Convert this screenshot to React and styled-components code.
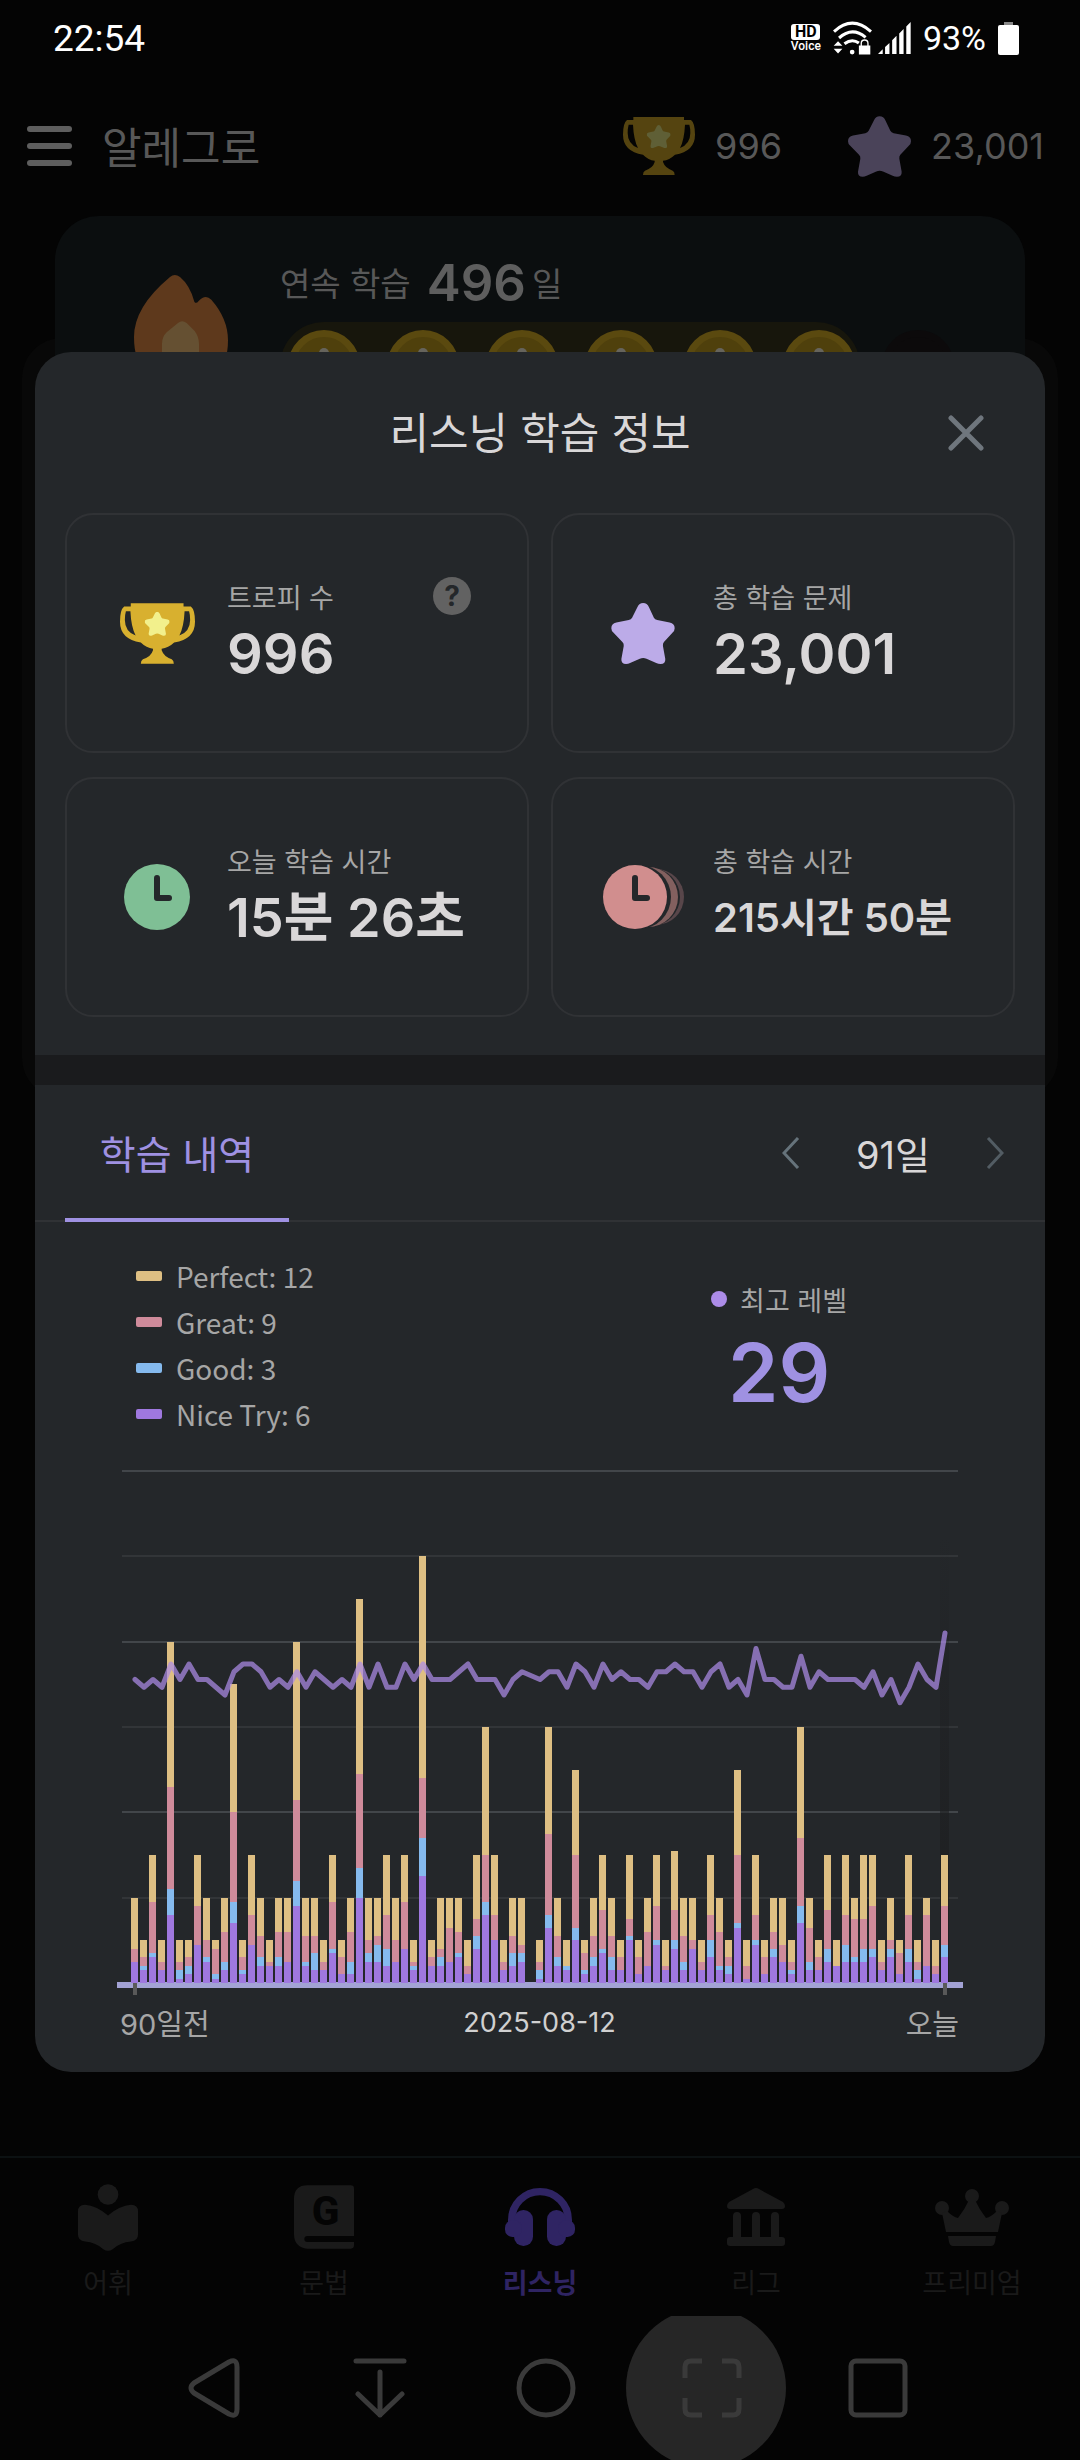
import React from 'react';
import styled, { createGlobalStyle } from 'styled-components';

const GlobalStyle = createGlobalStyle`
  * { box-sizing: border-box; }
  body {
    margin: 0;
    background: #040404;
    font-family: Inter, "Noto Sans CJK KR", sans-serif;
    -webkit-font-smoothing: antialiased;
  }
  button {
    padding: 0;
    border: 0;
    background: none;
    color: inherit;
    font: inherit;
    cursor: pointer;
  }
  svg { display: block; flex: none; }
`;

const Page = styled.div`
  position: relative;
  min-height: 100vh;
  display: flex;
  flex-direction: column;
  overflow: hidden;
  color: #585858;
`;

/* ---------- status bar ---------- */

const StatusBar = styled.div`
  display: flex;
  align-items: center;
  justify-content: space-between;
  height: 76px;
  padding: 0 61px 0 53px;
  color: #fff;
  font-family: Roboto, sans-serif;
  font-size: 37px;
`;

const StatusIcons = styled.div`
  display: flex;
  align-items: center;
  gap: 12px;
`;

const NetIcons = styled.div`
  display: flex;
  align-items: center;
  gap: 6px;
`;

const Percent = styled.span`
  font-size: 34px;
`;

const HdVoice = styled.div`
  display: flex;
  flex-direction: column;
  align-items: center;
  font-size: 12px;
  line-height: 12px;
  font-weight: 500;
`;

const HdBox = styled.span`
  width: 29px;
  border-radius: 3px;
  background: #fff;
  color: #000;
  font-size: 16px;
  line-height: 16px;
  font-weight: 700;
  text-align: center;
`;

/* ---------- page behind the dialog ---------- */

const Header = styled.header`
  display: flex;
  align-items: center;
  height: 140px;
  padding: 0 36px 0 27px;
`;

const MenuButton = styled.button`
  display: flex;
  flex-direction: column;
  gap: 11px;
  margin-right: 30px;

  span {
    width: 45px;
    height: 6px;
    border-radius: 3px;
    background: #5e5e5e;
  }
`;

const Name = styled.h1`
  flex: 1;
  margin: 0;
  padding-top: 4px;
  font-size: 43px;
  line-height: 60px;
  font-weight: 400;
`;

const Counter = styled.div`
  display: flex;
  align-items: center;
  gap: 20px;
  margin-left: 66px;
  font-size: 36px;
`;

const Streak = styled.section`
  position: relative;
  z-index: 1;
  display: flex;
  gap: 52px;
  height: 220px;
  margin: 0 55px;
  padding: 34px 79px;
  border-radius: 44px;
  background: #0b0e0f;
`;

const StreakFlame = styled.div`
  padding-top: 25px;
`;

const StreakText = styled.div`
  display: flex;
  align-items: center;
  gap: 16px;
  height: 64px;
  font-size: 33px;

  strong {
    font-size: 51px;
    font-weight: 600;
    color: #5e5e5e;
    margin-right: -10px;
  }
`;

const Coins = styled.div`
  display: flex;
  align-items: center;
  gap: 27px;
  width: 580px;
  height: 88px;
  margin-top: 8px;
  padding: 0 8px;
  border-radius: 44px;
  background: #17160c;
`;

const Coin = styled.span`
  flex: none;
  display: flex;
  justify-content: center;
  width: 72px;
  height: 72px;
  padding-top: 11px;
  border: 7px solid ${p => (p.$empty ? '#0c0a0b' : '#5a490f')};
  border-radius: 50%;
  background: ${p => (p.$empty ? '#0c0a0b' : '#4f400c')};

  &::before {
    content: "";
    width: 10px;
    height: 30px;
    border-radius: 5px;
    background: ${p => (p.$empty ? 'transparent' : '#66645c')};
  }
`;

const BackPanel = styled.div`
  height: 760px;
  margin: -98px 22px 0;
  border-radius: 40px;
  background: #080808;
`;

/* ---------- dialog ---------- */

const Dialog = styled.section`
  position: absolute;
  z-index: 2;
  top: 352px;
  left: 35px;
  right: 35px;
  border-radius: 36px;
  background: #24272a;
  color: #d9d7d8;
`;

const DialogHeader = styled.div`
  display: grid;
  grid-template-columns: 1fr auto 1fr;
  align-items: center;
  height: 161px;
  padding: 0 61px;

  h2 {
    grid-column: 2;
    margin: 0;
    font-size: 43px;
    line-height: 60px;
    font-weight: 400;
  }

  button {
    justify-self: end;
  }
`;

const Stats = styled.div`
  display: grid;
  grid-template-columns: repeat(2, minmax(0, 1fr));
  gap: 24px 22px;
  padding: 0 30px 38px;
`;

const StatCard = styled.article`
  display: flex;
  align-items: center;
  height: 240px;
  padding: 0 56px 0 48px;
  border: 2px solid #303235;
  border-radius: 28px;
`;

const StatIcon = styled.div`
  flex: none;
  display: flex;
  justify-content: center;
  width: 84px;
  margin-right: 28px;
`;

const StatBody = styled.div`
  flex: 1;
  min-width: 0;
  display: flex;
  flex-direction: column;
  gap: 6px;
  white-space: nowrap;
`;

const StatLabel = styled.div`
  display: flex;
  align-items: center;
  justify-content: space-between;
  height: 36px;
  color: #a6a6a6;
  font-size: 27px;
`;

const StatValue = styled.strong`
  font-size: ${p => p.$size || 56}px;
  line-height: 68px;
  font-weight: 600;
`;

const HelpButton = styled.button`
  width: 38px;
  height: 38px;
  border-radius: 50%;
  background: #626262;
  color: #24272a;
  font-size: 28px;
  line-height: 38px;
  font-weight: 700;
`;

const Band = styled.div`
  height: 30px;
  background: #1a1b1d;
`;

const TabRow = styled.div`
  display: flex;
  align-items: stretch;
  justify-content: space-between;
  height: 137px;
  padding: 0 41px 0 30px;
  border-bottom: 2px solid #303235;
`;

const Tab = styled.button`
  width: 224px;
  margin-bottom: -2px;
  border-bottom: 4px solid #9f91e2;
  color: #9f91e2;
  font-size: 39px;
`;

const Range = styled.div`
  display: flex;
  align-items: center;
  gap: 56px;
  font-size: 38px;
  color: #66737b;

  span { color: #d9d7d8; }
`;

const Summary = styled.div`
  display: grid;
  grid-template-columns: 13fr 10fr;
  align-items: center;
  padding: 31px 82px;
`;

const Legend = styled.ul`
  margin: 0;
  padding: 0 0 0 19px;
  list-style: none;
`;

const LegendItem = styled.li`
  display: flex;
  align-items: center;
  gap: 14px;
  height: 46px;
  color: #a6a6a6;
  font-family: "Noto Sans CJK KR", sans-serif;
  font-size: 28px;

  &::before {
    content: "";
    width: 26px;
    height: 10px;
    border-radius: 2px;
    background: ${p => p.$color};
  }
`;

const Level = styled.div`
  display: flex;
  flex-direction: column;
  align-items: center;
  padding-top: 16px;
`;

const LevelLabel = styled.div`
  display: flex;
  align-items: center;
  gap: 13px;
  height: 40px;
  color: #a6a6a6;
  font-size: 27px;

  &::before {
    content: "";
    width: 16px;
    height: 16px;
    border-radius: 50%;
    background: #ac8ce8;
  }
`;

const LevelValue = styled.strong`
  color: #9f91e2;
  font-size: 81px;
  line-height: 108px;
  font-weight: 600;
`;

const ChartBox = styled.div`
  padding: 0 82px 24px;

  svg {
    width: 100%;
    height: auto;
  }
`;

const AxisLabels = styled.div`
  display: grid;
  grid-template-columns: 1fr auto 1fr;
  align-items: center;
  height: 52px;
  padding: 0 4px 0 3px;
  color: #a6a6a6;
  font-size: 29px;

  time {
    color: #d0d0d0;
    font-size: 27px;
  }

  span:last-child { text-align: right; }
`;

/* ---------- bottom bars ---------- */

const TabBar = styled.nav`
  display: grid;
  grid-template-columns: repeat(5, 1fr);
  height: 160px;
  margin-top: auto;
  border-top: 2px solid #0c1112;
`;

const TabLink = styled.a`
  display: flex;
  flex-direction: column;
  align-items: center;
  gap: 12px;
  padding-top: 24px;
  color: ${p => (p.$active ? '#2f2463' : '#1a1a1a')};
  font-size: 27px;
  line-height: 40px;
  font-weight: ${p => (p.$active ? 700 : 400)};
  text-decoration: none;
`;

const TabIcon = styled.span`
  display: flex;
  align-items: center;
  height: 70px;
`;

const SystemBar = styled.div`
  display: grid;
  grid-template-columns: repeat(5, 1fr);
  height: 144px;
  padding: 0 119px 0 131px;
  overflow: hidden;
  color: #3a3a3a;
`;

const SystemButton = styled.button`
  position: relative;
  display: flex;
  align-items: center;
  justify-content: center;

  svg { position: relative; }
`;

const Ripple = styled.span`
  position: absolute;
  top: -8px;
  left: -3px;
  width: 160px;
  height: 160px;
  border-radius: 50%;
  background: #262626;
`;

/* ---------- icons ---------- */

const STAR =
  'M836 316Q848 316 853 328L868 360Q871 366 878 367L915 374Q930 377 930 391Q930 398 924 404L898 432Q894 437 895 444L902 483Q903 498 888 498Q881 498 875 495L846 482Q836 478 826 482L797 495Q791 498 785 498Q770 498 771 483L778 444Q779 437 774 432L747 404Q741 398 741 391Q741 377 756 374L793 367Q800 366 803 360L819 328Q824 316 836 316Z';

const StarIcon = ({ color, ...rest }) => (
  <svg viewBox="741 316 189 182" fill={color} aria-hidden="true" {...rest}>
    <path d={STAR} />
  </svg>
);

const TrophyIcon = ({ color, star, width, height }) => (
  <svg viewBox="66 327 216 174" width={width} height={height} aria-hidden="true">
    <path
      fill={color}
      fillRule="evenodd"
      d="M97 327H249V336H270Q282 345 282 380Q282 430 222 440Q205 456 186 458V462Q192 480 215 488Q221 491 221 501H126Q126 491 132 488Q156 480 161 462V458Q142 456 126 440Q66 430 66 380Q66 345 78 336H97ZM83 350H96Q98 395 111 420Q80 408 80 375Q80 360 83 350ZM265 350H252Q250 395 237 420Q268 408 268 375Q268 360 265 350Z"
    />
    <StarIcon color={star} x="137" y="351" width="72" height="70" />
  </svg>
);

const ClockIcon = ({ color, trail }) => (
  <svg viewBox={trail ? '0 0 82 66' : '0 0 66 66'} width={trail ? 82 : 66} height="66" aria-hidden="true">
    {trail && (
      <>
        <circle cx="54" cy="33" r="28" fill="#58464a" />
        <circle cx="49" cy="33" r="29" fill="#24272a" />
        <circle cx="46" cy="33" r="30" fill="#83605f" />
        <circle cx="37" cy="33" r="32" fill="#24272a" />
      </>
    )}
    <circle cx="33" cy="33" r={trail ? 32 : 33} fill={color} />
    <path d="M33 14V34H45" fill="none" stroke="#24272a" strokeWidth="6" strokeLinecap="round" strokeLinejoin="round" />
  </svg>
);

const FlameIcon = () => (
  <svg viewBox="222 104 282 330" width="94" height="110" aria-hidden="true">
    <path fill="#5e391c" d="M330 110Q344 98 360 110Q390 135 403 184Q408 192 416 182Q436 160 454 178Q504 235 504 300Q504 434 363 434Q222 434 222 290Q222 200 330 110Z" />
    <path fill="#655032" d="M354 248Q366 238 380 248L404 272Q417 290 417 310V434H306V310Q306 290 320 276Z" />
  </svg>
);

const WifiIcon = () => (
  <svg viewBox="709 32 116 100" width="39" height="34" fill="#fff" aria-hidden="true">
    <g fill="none" stroke="#fff" strokeWidth="9">
      <path d="M712 63Q766 13 822 63" />
      <path d="M727 82Q766 47 806 80" />
      <path d="M743 99Q766 82 786 97" />
      <path d="M793 106V98a10 10 0 0 1 20 0v8" strokeWidth="4" />
    </g>
    <circle cx="766" cy="124" r="7" />
    <path d="M711 105L724 92L737 105ZM711 114L724 128L737 114ZM786 104H820V131H786Z" />
  </svg>
);

const SignalIcon = () => (
  <svg viewBox="844 36 98 95" width="33" height="32" fill="#fff" aria-hidden="true">
    <path d="M844 131L858 117V131ZM865 131V110L878 98V131ZM886 131V90L899 77V131ZM907 131V70L920 57V131ZM928 131V49L941 36V131Z" />
  </svg>
);

const BatteryIcon = () => (
  <svg viewBox="0 0 21 33" width="21" height="33" aria-hidden="true">
    <path d="M6 0h9v3H6z" fill="#888" />
    <rect y="3" width="21" height="30" rx="2" fill="#fff" />
  </svg>
);

const CloseIcon = () => (
  <svg viewBox="0 0 36 36" width="36" height="36" stroke="#6f767d" strokeWidth="5" strokeLinecap="round" aria-hidden="true">
    <path d="M3 3L33 33M33 3L3 33" />
  </svg>
);

const Arrow = ({ d, dim }) => (
  <svg viewBox="0 0 18 32" width="18" height="32" fill="none" stroke={dim ? '#525c63' : '#66737b'} strokeWidth="3" aria-hidden="true">
    <path d={d} />
  </svg>
);

const WordsIcon = () => (
  <svg viewBox="54 43 180 200" width="60" height="67" fill="currentColor" aria-hidden="true">
    <circle cx="144" cy="74" r="31" />
    <path d="M75 105Q110 108 144 137Q178 108 213 105Q234 105 234 125V195Q234 213 213 215Q180 218 158 238Q144 248 130 238Q108 218 75 215Q54 213 54 195V125Q54 105 75 105Z" />
  </svg>
);

const GrammarIcon = () => (
  <svg viewBox="702 48 180 192" width="60" height="64" aria-hidden="true">
    <path fill="currentColor" d="M742 49H872Q882 49 882 59V201H742a9 9 0 0 0 0 18H882V229Q882 239 872 239H742Q702 235 702 195V90Q702 49 742 49Z" />
    <text x="797" y="169" textAnchor="middle" fontFamily="Roboto, sans-serif" fontSize="122" fontWeight="800" fill="#040404">G</text>
  </svg>
);

const ListenIcon = () => (
  <svg viewBox="1335 51 210 174" width="70" height="58" fill="currentColor" aria-hidden="true">
    <path d="M1355 165V147a85 85 0 0 1 170 0V165" fill="none" stroke="currentColor" strokeWidth="22" />
    <rect x="1362" y="117" width="57" height="108" rx="28" />
    <rect x="1461" y="117" width="57" height="108" rx="28" />
    <rect x="1335" y="148" width="50" height="50" rx="22" />
    <rect x="1495" y="148" width="50" height="50" rx="22" />
  </svg>
);

const LeagueIcon = () => (
  <svg viewBox="0 0 58 58" width="58" height="58" fill="currentColor" aria-hidden="true">
    <path d="M26 1Q29 -1 32 1L56 14Q58 16 58 18Q58 21 55 21H3Q0 21 0 18Q0 16 2 14Z" />
    <path d="M6 50V28a4 4 0 0 1 8 0V50ZM25 50V28a4 4 0 0 1 8 0V50ZM44 50V28a4 4 0 0 1 8 0V50Z" />
    <rect y="49" width="58" height="9" rx="3" />
  </svg>
);

const CrownIcon = () => (
  <svg viewBox="0 0 74 57" width="74" height="57" fill="currentColor" aria-hidden="true">
    <circle cx="37" cy="7" r="7" />
    <circle cx="7" cy="19" r="7" />
    <circle cx="67" cy="19" r="7" />
    <path d="M7 24L12 22Q18 28 23 29Q30 20 34 11H40Q44 20 51 29Q56 28 62 22L67 24L63 43H11ZM13 47H61L60 53Q59 57 56 57H18Q15 57 14 53Z" />
  </svg>
);

const SystemIcon = ({ width = 60, viewBox = '0 0 60 60', children }) => (
  <svg viewBox={viewBox} width={width} height="60" fill="none" stroke="currentColor" strokeWidth="5" strokeLinecap="round" strokeLinejoin="round" aria-hidden="true">
    {children}
  </svg>
);

/* ---------- chart ---------- */

// one entry per day: [nice try, good, great, perfect]
const DAYS = [
  [5, 0, 3, 12], [3, 1, 2, 4], [6, 1, 12, 11], [3, 0, 2, 5], [16, 6, 24, 34], [1, 2, 2, 5], [2, 2, 2, 4],
  [9, 0, 9, 12], [5, 1, 4, 10], [1, 1, 6, 2], [3, 2, 7, 8], [14, 5, 21, 30], [2, 1, 3, 4], [9, 0, 7, 14],
  [4, 2, 5, 9], [4, 0, 1, 5], [4, 2, 6, 8], [5, 0, 7, 8], [18, 6, 19, 37], [4, 1, 6, 9], [3, 4, 4, 9],
  [3, 0, 2, 5], [7, 1, 11, 11], [2, 0, 4, 4], [2, 3, 7, 8], [20, 7, 22, 41], [5, 2, 3, 10], [5, 4, 2, 9],
  [4, 4, 8, 14], [5, 0, 5, 10], [8, 0, 11, 11], [3, 1, 1, 5], [25, 9, 14, 52], [4, 0, 2, 4], [4, 2, 2, 12],
  [5, 0, 8, 7], [6, 1, 5, 8], [2, 0, 2, 6], [8, 3, 4, 15], [16, 3, 11, 30], [10, 0, 6, 14], [3, 0, 2, 5],
  [4, 3, 4, 9], [5, 2, 2, 11], [0, 0, 0, 0], [1, 2, 2, 5], [13, 3, 19, 25], [4, 2, 5, 9], [3, 1, 0, 6],
  [10, 3, 17, 20], [2, 1, 4, 3], [4, 2, 5, 9], [7, 1, 9, 13], [3, 3, 5, 9], [3, 0, 3, 4], [10, 1, 4, 15],
  [2, 0, 4, 4], [4, 0, 8, 8], [9, 1, 8, 12], [3, 0, 1, 6], [8, 2, 7, 14], [3, 2, 6, 9], [8, 0, 2, 10],
  [3, 0, 2, 5], [6, 4, 6, 14], [3, 1, 8, 8], [2, 2, 2, 4], [13, 1, 16, 20], [1, 0, 3, 6], [9, 1, 6, 14],
  [2, 0, 4, 4], [6, 2, 4, 8], [5, 0, 4, 11], [2, 1, 2, 5], [14, 4, 16, 26], [3, 2, 8, 7], [3, 0, 3, 4],
  [5, 3, 9, 13], [4, 0, 0, 6], [5, 4, 7, 14], [5, 1, 9, 5], [5, 3, 7, 15], [6, 2, 10, 12], [3, 0, 2, 5],
  [6, 2, 2, 10], [2, 0, 5, 3], [5, 3, 8, 14], [1, 2, 2, 5], [4, 0, 12, 4], [2, 0, 2, 6], [6, 3, 9, 12],
];

const LEVELS = [
  23, 22, 23, 22, 25, 23, 25, 23, 23, 22, 21, 24, 25, 25, 24, 22, 23, 22, 24, 22, 24, 23, 22, 23, 22, 25, 22, 25, 22, 22,
  25, 23, 25, 23, 23, 23, 24, 25, 23, 23, 23, 21, 23, 24, null, 23, 24, 24, 22, 25, 24, 22, 25, 23, 24, 23, 23, 22, 24, 24,
  25, 24, 24, 22, 24, 25, 22, 23, 21, 27, 23, 23, 22, 22, 26, 22, 24, 23, 23, 23, 23, 22, 24, 21, 23, 20, 22, 25, 23, 22,
  29,
];

const COLORS = ['#9f78df', '#85baee', '#cf8b9b', '#debf83'];
const BASE = 515;
const UNIT = 512 / 120;
const STEP = 9;

const barX = i => 14 + i * STEP;
const levelY = level => 165 + (29 - level) * 7.75;

const Bar = ({ day, index }) => {
  let total = 0;
  return day.map((count, k) => {
    const bottom = Math.round(BASE - total * UNIT);
    total += count;
    const top = Math.round(BASE - total * UNIT);
    return count ? <rect key={k} x={barX(index)} y={top} width="7" height={bottom - top} fill={COLORS[k]} /> : null;
  });
};

const Chart = () => (
  <svg viewBox="0 0 846 528" role="img" aria-label="학습 내역">
    <defs>
      <linearGradient id="today" x1="0" y1="0" x2="0" y2="1">
        <stop offset="0" stopColor="#1d1e20" stopOpacity="0" />
        <stop offset="1" stopColor="#1d1e20" />
      </linearGradient>
    </defs>
    {[0, 20, 40, 60, 80, 100].map(n => (
      <rect key={n} x="5" y={Math.round(BASE - (120 - n) * UNIT) - 1} width="836" height="2" fill={n % 40 ? '#323538' : '#42464a'} />
    ))}
    <rect x="823" y="66" width="9" height={BASE - 66} fill="url(#today)" />
    <rect x="0" y="514" width="846" height="6" fill="#a2a2d4" />
    {DAYS.map((day, i) => <Bar key={i} day={day} index={i} />)}
    <rect x="16" y={BASE} width="4" height="12" fill="#595959" />
    <rect x="826" y={BASE} width="4" height="12" fill="#595959" />
    <polyline
      points={LEVELS.map((l, i) => (l ? `${barX(i) + 4},${levelY(l)}` : '')).join(' ')}
      fill="none"
      stroke="#ac8ce8"
      strokeOpacity="0.72"
      strokeWidth="5"
      strokeLinecap="round"
      strokeLinejoin="round"
    />
  </svg>
);

const TABS = [
  { label: '어휘', Icon: WordsIcon },
  { label: '문법', Icon: GrammarIcon },
  { label: '리스닝', Icon: ListenIcon, active: true },
  { label: '리그', Icon: LeagueIcon },
  { label: '프리미엄', Icon: CrownIcon },
];

const App = () => {
  return (
    <Page>
      <GlobalStyle />
      <StatusBar>
        <span>22:54</span>
        <StatusIcons>
          <HdVoice><HdBox>HD</HdBox>Voice</HdVoice>
          <NetIcons>
            <WifiIcon />
            <SignalIcon />
          </NetIcons>
          <Percent>93%</Percent>
          <BatteryIcon />
        </StatusIcons>
      </StatusBar>

      <Header>
        <MenuButton aria-label="메뉴"><span /><span /><span /></MenuButton>
        <Name>알레그로</Name>
        <Counter><TrophyIcon color="#554410" star="#5f5f36" width="72" height="58" />996</Counter>
        <Counter><StarIcon color="#4a4359" width="63" height="61" />23,001</Counter>
      </Header>

      <Streak>
        <StreakFlame><FlameIcon /></StreakFlame>
        <div>
          <StreakText>연속 학습 <strong>496</strong> 일</StreakText>
          <Coins>
            {[0, 1, 2, 3, 4, 5].map(n => <Coin key={n} />)}
            <Coin $empty />
          </Coins>
        </div>
      </Streak>
      <BackPanel />

      <Dialog role="dialog" aria-labelledby="dialog-title">
        <DialogHeader>
          <h2 id="dialog-title">리스닝 학습 정보</h2>
          <button aria-label="닫기"><CloseIcon /></button>
        </DialogHeader>

        <Stats>
          <StatCard>
            <StatIcon><TrophyIcon color="#d8b02f" star="#f2f08c" width="75" height="61" /></StatIcon>
            <StatBody>
              <StatLabel>트로피 수 <HelpButton aria-label="도움말">?</HelpButton></StatLabel>
              <StatValue>996</StatValue>
            </StatBody>
          </StatCard>
          <StatCard>
            <StatIcon><StarIcon color="#bcabe8" width="64" height="61" /></StatIcon>
            <StatBody>
              <StatLabel>총 학습 문제</StatLabel>
              <StatValue>23,001</StatValue>
            </StatBody>
          </StatCard>
          <StatCard>
            <StatIcon><ClockIcon color="#7fbf95" /></StatIcon>
            <StatBody>
              <StatLabel>오늘 학습 시간</StatLabel>
              <StatValue $size={54}>15분 26초</StatValue>
            </StatBody>
          </StatCard>
          <StatCard>
            <StatIcon><ClockIcon color="#d18e8e" trail /></StatIcon>
            <StatBody>
              <StatLabel>총 학습 시간</StatLabel>
              <StatValue $size={40}>215시간 50분</StatValue>
            </StatBody>
          </StatCard>
        </Stats>

        <Band />

        <TabRow>
          <Tab>학습 내역</Tab>
          <Range>
            <button aria-label="이전"><Arrow d="M16 1L2 16L16 31" /></button>
            <span>91일</span>
            <button aria-label="다음"><Arrow dim d="M2 1L16 16L2 31" /></button>
          </Range>
        </TabRow>

        <Summary>
          <Legend>
            <LegendItem $color={COLORS[3]}>Perfect: 12</LegendItem>
            <LegendItem $color={COLORS[2]}>Great: 9</LegendItem>
            <LegendItem $color={COLORS[1]}>Good: 3</LegendItem>
            <LegendItem $color={COLORS[0]}>Nice Try: 6</LegendItem>
          </Legend>
          <Level>
            <LevelLabel>최고 레벨</LevelLabel>
            <LevelValue>29</LevelValue>
          </Level>
        </Summary>

        <ChartBox>
          <Chart />
          <AxisLabels>
            <span>90일전</span>
            <time>2025-08-12</time>
            <span>오늘</span>
          </AxisLabels>
        </ChartBox>
      </Dialog>

      <TabBar>
        {TABS.map(({ label, Icon, active }) => (
          <TabLink key={label} href="#" $active={active}>
            <TabIcon><Icon /></TabIcon>
            {label}
          </TabLink>
        ))}
      </TabBar>

      <SystemBar>
        <SystemButton aria-label="뒤로">
          <SystemIcon width={52} viewBox="0 0 52 60">
            <path d="M49 9V51Q49 60 41 56L6 35Q0 30 6 25L41 4Q49 0 49 9Z" />
          </SystemIcon>
        </SystemButton>
        <SystemButton aria-label="내리기">
          <SystemIcon width={54} viewBox="0 0 54 60">
            <path d="M3 3H51M27 14V57M5 36L27 57L49 36" />
          </SystemIcon>
        </SystemButton>
        <SystemButton aria-label="홈">
          <SystemIcon><circle cx="30" cy="30" r="27" /></SystemIcon>
        </SystemButton>
        <SystemButton aria-label="캡처">
          <Ripple />
          <SystemIcon><path strokeLinecap="butt" d="M3 20V9Q3 3 9 3H20M40 3H51Q57 3 57 9V20M57 40V51Q57 57 51 57H40M20 57H9Q3 57 3 51V40" /></SystemIcon>
        </SystemButton>
        <SystemButton aria-label="최근 앱">
          <SystemIcon><rect x="3" y="3" width="54" height="54" rx="5" /></SystemIcon>
        </SystemButton>
      </SystemBar>
    </Page>
  );
};

export default App;
